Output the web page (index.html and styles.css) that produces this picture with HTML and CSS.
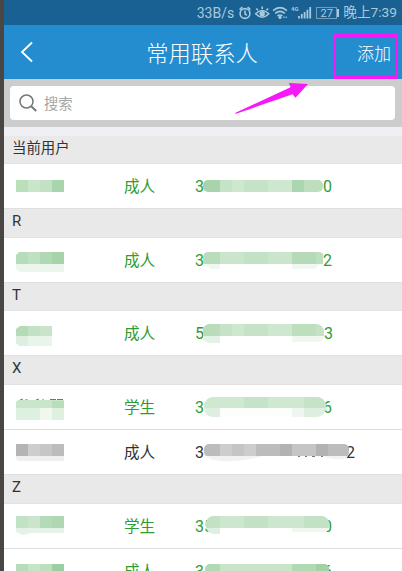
FILE: index.html
```html
<!DOCTYPE html>
<html lang="zh-CN">
<head>
    <meta charset="UTF-8">
    <meta name="viewport" content="width=device-width, initial-scale=1.0">
    <title>常用联系人</title>
    <link rel="stylesheet" href="styles.css">
</head>
<body>
    <div class="app">
        <div class="status-bar">
            <span class="speed">33B/s</span>
            <svg class="status-icons" width="73" height="16" viewBox="239 4 73 16" fill="none" stroke="currentColor" stroke-width="1.6">
                <!-- alarm -->
                <circle cx="245" cy="12.5" r="4.9"/>
                <path d="M245 9.6v3.2l1.9 1.5M239.6 8.6l2.8-2.6M250.4 8.6l-2.8-2.6"/>
                <!-- eye -->
                <path d="M255.6 12.8q6.6-6.6 13.2 0q-6.6 6.8-13.2 0zM257.9 9.3l-1.6-1.8M262.2 8V5.6M266.5 9.3l1.6-1.8"/>
                <circle cx="262.2" cy="12.8" r="1.9" fill="currentColor"/>
                <!-- wifi -->
                <path d="M273.1 9.6q6.9-5.8 13.8 0M275.2 12.4q4.8-4 9.6 0M277.4 15q2.6-2 5 0"/>
                <circle cx="280" cy="16.4" r=".8" fill="currentColor"/>
                <path d="M283.3 16.2h1.2M285.6 16.2h1.2"/>
                <!-- signal -->
                <path d="M299 15v2.6M301.8 13v4.6M304.6 11v6.6M307.4 8.8v8.8M310.2 6v11.6" stroke-width="1.8"/>
                <text x="291" y="10" class="net">4G</text>
            </svg>
            <span class="battery">27</span>
            <span class="clock">晚上7:39</span>
        </div>

        <div class="nav-bar">
            <svg class="back" width="14" height="22" viewBox="0 0 14 22"><path d="M12 1.5L2 11l10 9.5" fill="none" stroke="#fff" stroke-width="1.8"/></svg>
            <h1>常用联系人</h1>
            <a class="add">添加</a>
            <div class="highlight"></div>
            <svg class="arrow" width="74" height="32" viewBox="235 82 74 32"><path d="M308 84L289 83l1.5 4.3L235 113l1 .8L292.5 94.3l3 3.4z" fill="#f618f6"/></svg>
        </div>

        <div class="search">
            <div class="search-box">
                <svg width="18" height="18" viewBox="0 0 18 18" fill="none" stroke="#777" stroke-width="1.5"><circle cx="7.5" cy="7.5" r="6.5"/><path d="M12.2 12.2l5 4.8" stroke-width="2"/></svg>
                <span>搜索</span>
            </div>
        </div>

        <div class="list">
            <div class="group first">当前用户</div>
            <div class="row">
                <svg class="name" width="48" height="44" viewBox="16 164 48 44">
                    <path fill="#b9dfbb" d="M16 180h12v12H16z"/><path fill="#c9e5ca" d="M28 180h12v12H28z"/><path fill="#c3e2c4" d="M40 180h12v12H40z"/><path fill="#a9d5ad" d="M52 180h12v12H52z"/>
                </svg>
                <span class="type">成人</span>
                <div class="number">
                    <span>3</span>
                    <svg width="120" height="44" viewBox="203 164 120 44">
                        <g clip-path="url(#pill1)"><path fill="#a9d3ad" d="M203 180h17v12h-17z"/><path fill="#c5e3c7" d="M220 180h72v12h-72z"/><path fill="#cee7cf" d="M232 180h12v12h-12zM268 180h24v12h-24z"/><path fill="#abd6af" d="M292 180h12v12h-12z"/><path fill="#bddfbf" d="M304 180h19v12h-19z"/></g>
                        <clipPath id="pill1"><rect x="203" y="180" width="120" height="12" rx="5"/></clipPath>
                    </svg>
                    <span>0</span>
                </div>
            </div>

            <div class="group">R</div>
            <div class="row">
                <svg class="name" width="48" height="44" viewBox="16 238 48 44">
                    <path fill="#b7dcb9" d="M19 252h9v12H16v-9z"/><path fill="#bfe0c1" d="M28 252h12v12H28z"/><path fill="#b0d9b3" d="M40 252h12v12H40z"/><path fill="#a6d4aa" d="M52 252h12v12H52z"/><path fill="#edf6ed" d="M16 264h48v8H20l-4-3z"/>
                </svg>
                <span class="type">成人</span>
                <div class="number">
                    <span>3</span>
                    <svg width="120" height="44" viewBox="203 238 120 44">
                        <g clip-path="url(#pill2)"><path fill="#b9dcbb" d="M203 252h17v12h-17z"/><path fill="#cbe5cc" d="M220 252h72v12h-72z"/><path fill="#c3e1c4" d="M244 252h24v12h-24z"/><path fill="#b4dab7" d="M292 252h24v12h-24z"/><path fill="#bddebf" d="M316 252h7v12h-7z"/></g>
                        <path fill="#f1f8f1" d="M205 264h15v5h-9zM292 264h28l-5 5h-23z"/>
                        <clipPath id="pill2"><rect x="203" y="252" width="121" height="15" rx="5"/></clipPath>
                    </svg>
                    <span>2</span>
                </div>
            </div>

            <div class="group short">T</div>
            <div class="row">
                <svg class="name" width="48" height="44" viewBox="16 311 48 44">
                    <path fill="#b5dab6" d="M20 326h8v10H16v-7z"/><path fill="#c3e1c4" d="M28 326h12v10H28z"/><path fill="#c9e4ca" d="M40 326h12v10H40z"/><path fill="#dfefdf" d="M16 336h12v10h-9l-3-3z"/><path fill="#e9f4ea" d="M28 336h24v10H28z"/>
                </svg>
                <span class="type">成人</span>
                <div class="number">
                    <span>5</span>
                    <svg width="121" height="44" viewBox="203 311 121 44">
                        <g clip-path="url(#pill3)"><path fill="#b9dcb9" d="M203 324h17v12h-17z"/><path fill="#c6e3c7" d="M220 324h72v12h-72z"/><path fill="#cee7cf" d="M232 324h12v12h-12zM268 324h24v12h-24z"/><path fill="#bcdfbd" d="M292 324h24v12h-24z"/><path fill="#c5e2c6" d="M316 324h8v12h-8z"/><path fill="#e5f2e5" d="M203 336h17v7h-17z"/><path fill="#eff7ef" d="M292 336h32v6h-32z"/></g>
                        <clipPath id="pill3"><rect x="202" y="324" width="122" height="19" rx="8"/></clipPath>
                    </svg>
                    <span>3</span>
                </div>
            </div>

            <div class="group">X</div>
            <div class="row">
                <svg class="name" width="48" height="44" viewBox="16 385 48 44">
                    <path fill="none" stroke="#369e39" d="M20 400l3-1M25 400h3M36 400l3-1M42 400h2M50 399.5h6M57 399.5h6"/>
                    <path fill="#c9e5ca" d="M18 400h46v8H16v-6z"/><path fill="#b9dcba" d="M52 401h12v7H52z"/><path fill="#def0df" d="M16 408h48v12H16z"/><path fill="#eff7ef" d="M40 408h12v12H40z"/>
                </svg>
                <span class="type">学生</span>
                <div class="number">
                    <span>3</span>
                    <svg class="cover" width="122" height="44" viewBox="204 385 122 44">
                        <g clip-path="url(#pill4)"><path fill="#cfe8d0" d="M204 397h122v11H204z"/><path fill="#c5e3c6" d="M244 397h24v11h-24zM304 397h22v11h-22z"/><path fill="#deefdf" d="M204 408h16v9h-16zM304 408h22v9h-22z"/><path fill="#fcfefc" d="M220 408h72v9h-72z"/><path fill="#eff6ef" d="M292 408h12v9h-12z"/></g>
                        <clipPath id="pill4"><rect x="204" y="397" width="122" height="20" rx="9"/></clipPath>
                    </svg>
                    <span>6</span>
                </div>
            </div>
            <div class="row divided other">
                <svg class="name" width="48" height="44" viewBox="16 430 48 44">
                    <path fill="#b4b4b4" d="M16 444h12v12H16z"/><path fill="#cdcdcd" d="M28 444h12v12H28z"/><path fill="#c6c6c6" d="M40 444h12v12H40z"/><path fill="#bcbcbc" d="M52 444h12v12H52z"/><path fill="#efefef" d="M16 456h48v5H18l-2-2z"/>
                </svg>
                <span class="type">成人</span>
                <div class="number">
                    <span>3</span>
                    <svg class="cover" width="145" height="44" viewBox="204 430 145 44">
                        <g clip-path="url(#pill5)"><path fill="#bcbcbc" d="M204 444h145v12H204z"/><path fill="#cdcdcd" d="M220 444h12v12h-12zM244 444h12v12h-12z"/><path fill="#c5c5c5" d="M232 444h12v12h-12zM292 444h24v12h-24z"/><path fill="#b2b2b2" d="M280 444h12v12h-12zM316 444h12v12h-12z"/></g>
                        <path fill="#f2f2f2" d="M207 456h56q-34 9-53 3zM325 456h23q-5 6-23 1z"/>
                        <path fill="none" stroke="#777" d="M298 456.5h2M305 456.5h2M312 456.5h3M321 456.5h2"/>
                        <clipPath id="pill5"><rect x="204" y="444" width="145" height="13" rx="5"/></clipPath>
                    </svg>
                    <span>2</span>
                </div>
            </div>

            <div class="group">Z</div>
            <div class="row">
                <svg class="name" width="48" height="44" viewBox="16 504 48 44">
                    <path fill="#c2e2c4" d="M16 516h12v12H16z"/><path fill="#cae5cb" d="M28 516h12v12H28z"/><path fill="#b4dab7" d="M40 516h12v12H40z"/><path fill="#afd7b1" d="M52 516h12v12H52z"/><path fill="#e7f2e7" d="M16 528h48v5H32l-9 2-7-3z"/>
                </svg>
                <span class="type">学生</span>
                <div class="number">
                    <span>35</span>
                    <svg class="cover over-digit" width="123" height="44" viewBox="206 504 123 44">
                        <g clip-path="url(#pill6)"><path fill="#cde6ce" d="M206 516h123v12H206z"/><path fill="#c3e2c5" d="M206 516h14v12h-14zM244 516h24v12h-24zM304 516h25v12h-25z"/><path fill="#e0f0e0" d="M206 528h14v7h-14z"/><path fill="#fff" d="M220 528h84v7h-84z"/><path fill="#eff7ef" d="M292 528h12v4h-12zM304 528h25v4h-25z"/></g>
                        <clipPath id="pill6"><rect x="206" y="516" width="123" height="18" rx="8"/></clipPath>
                    </svg>
                    <span>0</span>
                </div>
            </div>
            <div class="row divided">
                <svg class="name" width="48" height="44" viewBox="16 549 48 44">
                    <path fill="#b7dcb9" d="M16 564h12v12H16z"/><path fill="#c6e4c7" d="M28 564h12v12H28z"/><path fill="#bcdfbe" d="M40 564h12v12H40z"/><path fill="#9dcea1" d="M52 564h12v12H52z"/>
                </svg>
                <span class="type">成人</span>
                <div class="number">
                    <span>3</span>
                    <svg class="cover long" width="124" height="44" viewBox="205 549 124 44">
                        <g clip-path="url(#pill7)"><path fill="#b1d9b4" d="M205 564h124v12H205z"/><path fill="#c8e4c9" d="M220 564h72v12h-72z"/><path fill="#a2d1a5" d="M316 564h13v12h-13z"/></g>
                        <clipPath id="pill7"><rect x="205" y="564" width="124" height="16" rx="5"/></clipPath>
                    </svg>
                    <span>6</span>
                </div>
            </div>
        </div>
    </div>
</body>
</html>
```

FILE: styles.css
```css
* {
    margin: 0;
    padding: 0;
    box-sizing: border-box;
}

body {
    height: 100vh;
    overflow: hidden;
    background-color: #494643;
    font-family: Roboto, "Noto Sans CJK SC", sans-serif;
    color: #333;
}

.app {
    height: 100vh;
    margin-left: 4px;
    overflow: hidden;
    background-color: #fff;
}

/* Status bar */
.status-bar {
    display: flex;
    align-items: center;
    justify-content: flex-end;
    height: 25px;
    padding-right: 5px;
    background-color: #196192;
    color: #a9c9dc;
    font-size: 13.5px;
    line-height: 16px;
    white-space: nowrap;
}

.speed {
    margin-right: 5px;
    font-size: 14px;
}

.net {
    font-size: 6px;
    font-weight: bold;
    fill: currentColor;
    stroke: none;
}

.battery {
    position: relative;
    width: 21px;
    height: 12px;
    margin: 0 6px 0 4px;
    border: 1px solid #6f9fbd;
    font-size: 11px;
    line-height: 11px;
    text-align: center;
}

.battery::after {
    content: "";
    position: absolute;
    top: 1px;
    right: -3px;
    width: 2px;
    height: 8px;
    background-color: #a9c9dc;
}

.clock {
    padding-bottom: 2px;
    font-size: 13.7px;
}

/* Navigation */
.nav-bar {
    position: relative;
    display: grid;
    grid-template-columns: 60px 1fr 60px;
    align-items: center;
    height: 54px;
    background-color: #248dd0;
    color: #fff;
}

.back {
    margin-left: 16px;
}

.nav-bar h1 {
    padding-right: 2px;
    font-size: 22.3px;
    font-weight: 300;
    text-align: center;
    white-space: nowrap;
}

.add {
    padding-right: 11px;
    font-size: 17px;
    font-weight: 300;
    text-align: right;
}

.highlight {
    position: absolute;
    top: 9px;
    left: 329px;
    width: 65px;
    height: 45px;
    border: 3px solid #f618f6;
    border-top-width: 4px;
}

.arrow {
    position: absolute;
    top: 57px;
    left: 231px;
    z-index: 1;
}

/* Search */
.search {
    height: 48px;
    padding: 7px 7px 7px 6px;
    background-color: #cdcdcd;
}

.search-box {
    display: flex;
    align-items: center;
    gap: 7px;
    height: 34px;
    padding-left: 9px;
    border-radius: 4px;
    background-color: #fff;
    color: #a5a5a5;
    font-size: 14.3px;
}

.search-box span {
    padding-bottom: 2px;
}

/* Contact list */
.list {
    padding-top: 9px;
    background-color: #efeff4;
}

.group {
    height: 30px;
    padding-left: 8px;
    border-top: 1px solid #e0e0e0;
    border-bottom: 1px solid #e2e2e2;
    background-color: #e9e9e9;
    font-size: 15px;
    line-height: 25px;
}

.group.first {
    height: 28px;
    border-top: 0;
    font-size: 14.4px;
    line-height: 26px;
}

.group.short {
    height: 29px;
}

.row {
    display: grid;
    grid-template-columns: 108px 71px 1fr;
    align-items: center;
    height: 44px;
    padding-left: 12px;
    background-color: #fff;
    color: #2f9c32;
    font-size: 16px;
}

.row.divided {
    height: 45px;
    border-top: 1px solid #dedede;
}

.row.other {
    color: #333;
}

.type {
    padding-bottom: 2px;
    font-size: 15.6px;
}

.number {
    display: flex;
    align-items: center;
    width: 137px;
}

/* The mosaic lies over the middle digits */
.number svg {
    position: relative;
    flex-shrink: 0;
    margin-left: -1px;
}

.number .cover {
    margin-left: 0;
    margin-right: -3px;
}

.number .long {
    margin-left: 1px;
    margin-right: -6px;
}

.number .over-digit {
    margin-left: -7px;
    margin-right: -6px;
}
```
